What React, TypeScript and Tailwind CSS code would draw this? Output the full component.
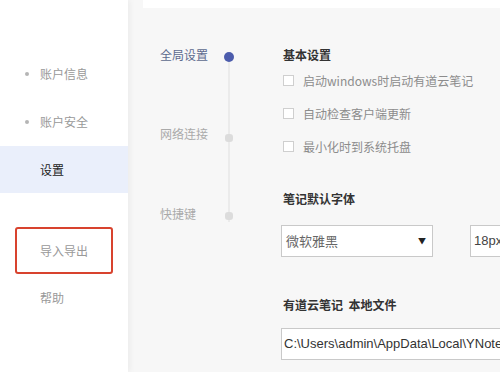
const cjk = { fontFamily: '"Noto Sans CJK SC", "Liberation Sans", sans-serif' }

function Checkbox({ label }: { label: string }) {
  return (
    <div className="flex items-center h-[33px]">
      <span className="w-[11px] h-[11px] border border-[#cfcfcf] bg-white mr-[9px]" />
      <span className="text-[12px] text-[#8c8c8c]">{label}</span>
    </div>
  )
}

export default function App() {
  return (
    <div className="w-[500px] h-[372px] overflow-hidden flex bg-[#f7f7f7]" style={cjk}>
      {/* sidebar */}
      <div className="w-[128px] shrink-0 h-full bg-white flex flex-col pt-[50px] shadow-[2px_0_6px_rgba(0,0,0,0.05)] z-10">
        <div className="h-[48px] flex items-center pl-[25px] text-[12px] text-[#999]">
          <span className="w-[4px] h-[4px] rounded-full bg-[#b5b5b5] mr-[11px]" />账户信息
        </div>
        <div className="h-[48px] flex items-center pl-[25px] text-[12px] text-[#999]">
          <span className="w-[4px] h-[4px] rounded-full bg-[#b5b5b5] mr-[11px]" />账户安全
        </div>
        <div className="h-[47px] flex items-center pl-[40px] text-[12px] text-[#222] bg-[#eaeffb]">设置</div>
        <div className="h-[34px]" />
        <div className="ml-[15px] w-[98px] h-[47px] border-2 border-[#d8432e] rounded-[3px] flex items-center pl-[23px] text-[12px] text-[#999]">
          导入导出
        </div>
        <div className="h-[48px] flex items-center pl-[40px] text-[12px] text-[#999]">帮助</div>
      </div>

      {/* main */}
      <div className="flex-1 min-w-0 h-full flex flex-col">
        <div className="h-[8px] ml-[15px] bg-white shrink-0" />
        <div className="flex flex-1">
          {/* timeline */}
          <div className="w-[150px] relative shrink-0">
            <div className="absolute left-[100px] top-[49px] w-[2px] h-[165px] bg-[#ebebeb]" />
            <div className="absolute left-[32px] top-[38px] text-[12px] text-[#5d6a8e]">全局设置</div>
            <div className="absolute left-[96px] top-[44px] w-[10px] h-[10px] rounded-full bg-[#4c5cac]" />
            <div className="absolute left-[32px] top-[117px] text-[12px] text-[#aaa]">网络连接</div>
            <div className="absolute left-[97px] top-[126px] w-[8px] h-[8px] rounded-[3px] bg-[#dcdcdc]" />
            <div className="absolute left-[32px] top-[197px] text-[12px] text-[#aaa]">快捷键</div>
            <div className="absolute left-[97px] top-[204px] w-[8px] h-[8px] rounded-[3px] bg-[#dcdcdc]" />
          </div>
          {/* content */}
          <div className="flex-1 min-w-0 flex flex-col pt-[38px] pl-[5px]">
            <div className="text-[12px] font-bold text-[#333] leading-[18px]">基本设置</div>
            <div className="flex flex-col">
              <Checkbox label="启动windows时启动有道云笔记" />
              <Checkbox label="自动检查客户端更新" />
              <Checkbox label="最小化时到系统托盘" />
            </div>
            <div className="text-[12px] font-bold text-[#333] mt-[27px] leading-[18px]">笔记默认字体</div>
            <div className="flex mt-[17px] gap-[37px] -ml-[2px]">
              <div className="w-[152px] h-[32px] shrink-0 bg-white border border-[#c9c9c9] flex items-center justify-between pl-[4px] pr-[6px]">
                <span className="text-[13px] text-[#666]">微软雅黑</span>
                <span className="text-[8px] text-[#222]">▼</span>
              </div>
              <div className="w-[60px] h-[32px] shrink-0 bg-white border border-[#c9c9c9] flex items-center pl-[3px]" style={{ fontFamily: '"Liberation Sans", sans-serif' }}>
                <span className="text-[13px] text-[#444]">18px</span>
              </div>
            </div>
            <div className="text-[12px] font-bold text-[#333] mt-[39px] leading-[18px]">有道云笔记&nbsp;&nbsp;本地文件</div>
            <div className="mt-[14px] -ml-[2px] w-[260px] shrink-0 h-[32px] bg-white border border-[#c9c9c9] flex items-center pl-[2px] overflow-hidden whitespace-nowrap" style={{ fontFamily: '"Liberation Sans", sans-serif' }}>
              <span className="text-[13px] text-[#333]">C:\Users\admin\AppData\Local\YNote</span>
            </div>
          </div>
        </div>
      </div>
    </div>
  )
}
